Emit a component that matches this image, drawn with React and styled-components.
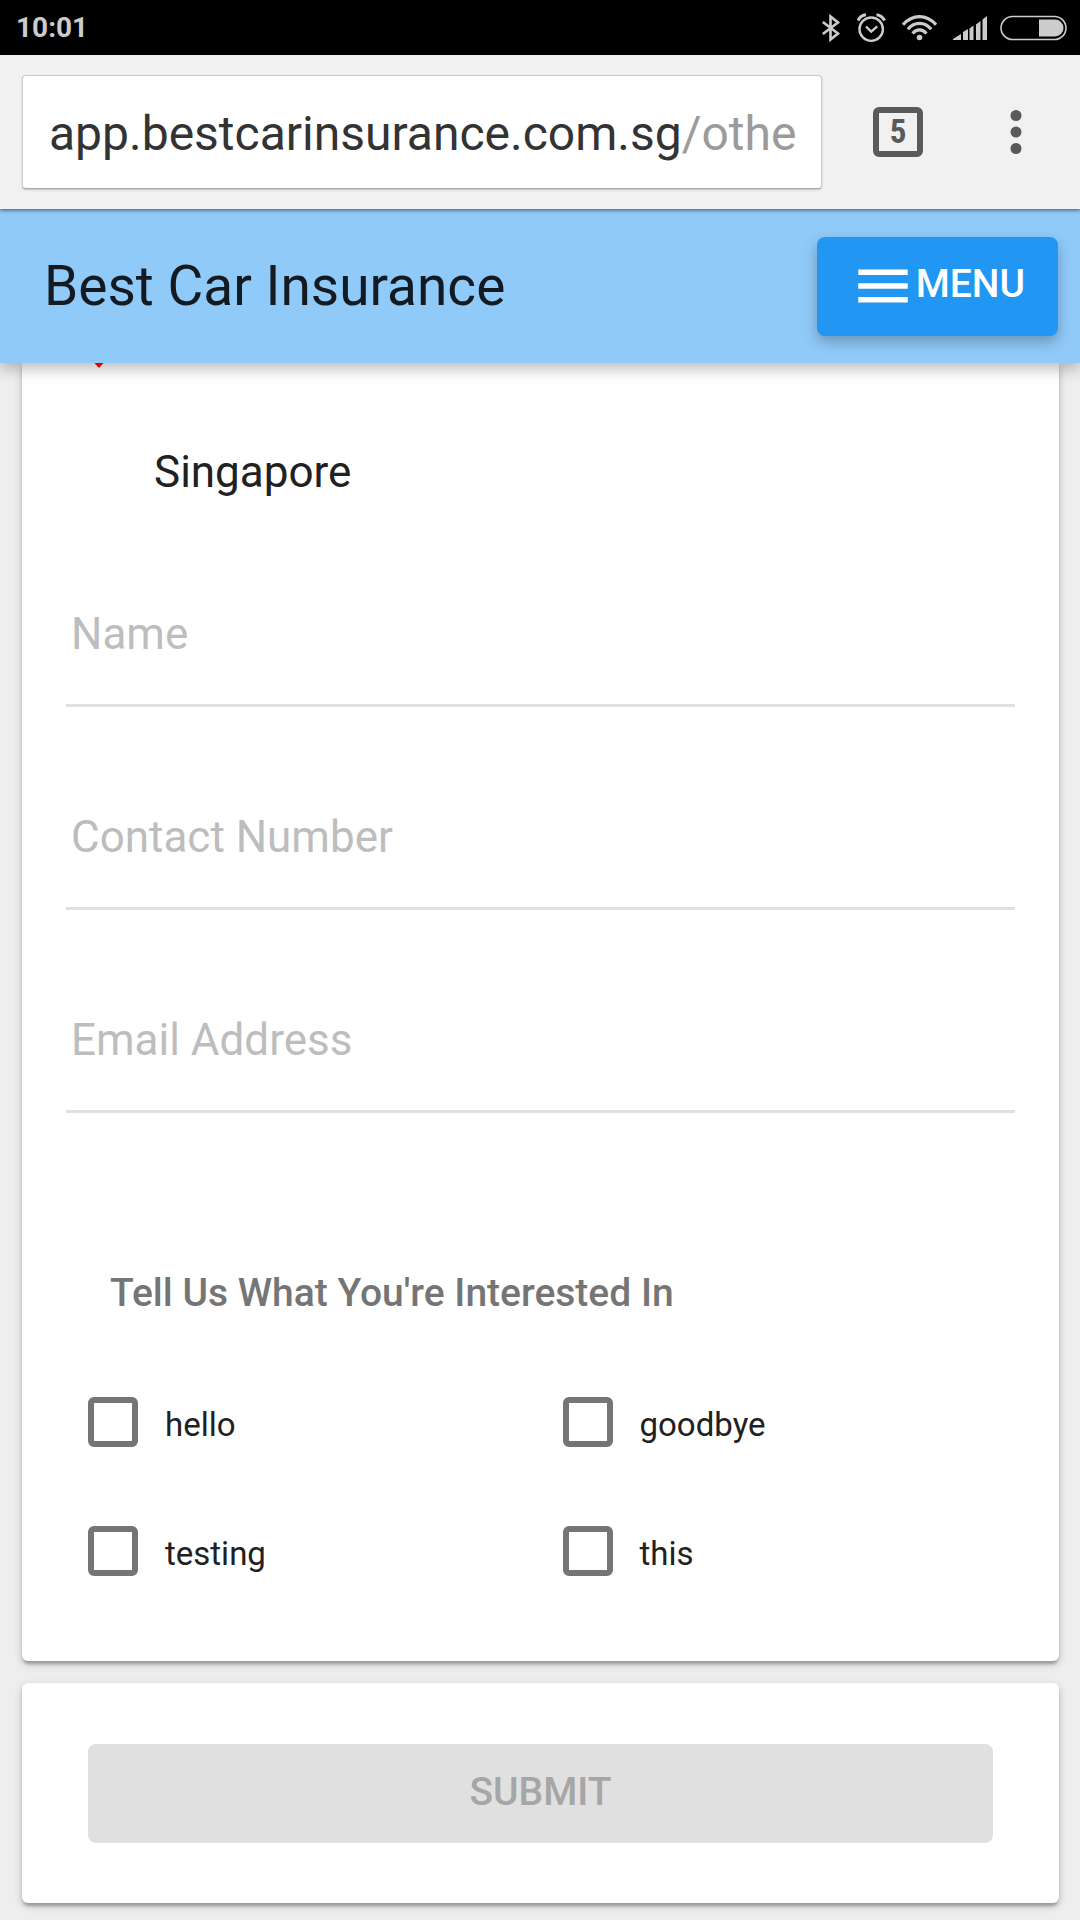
import React, { useState } from "react";
import styled, { createGlobalStyle } from "styled-components";

const GlobalStyle = createGlobalStyle`
  *, *::before, *::after { box-sizing: border-box; }
  body {
    margin: 0;
    background: #eeeeee;
    color: #212121;
    font-family: Roboto, "Liberation Sans", sans-serif;
  }
  button, input { font-family: inherit; }
`;

const Page = styled.div`
  display: flex;
  flex-direction: column;
  min-height: 100vh;
`;

const StatusBar = styled.div`
  display: flex;
  align-items: center;
  justify-content: space-between;
  height: 55px;
  padding: 0 13px 0 16px;
  background: #000;
  color: #ccc;
`;

const Clock = styled.time`
  font-size: 28px;
  line-height: 34px;
  font-weight: 700;
`;

const StatusIcons = styled.div`
  display: flex;
  align-items: center;
  gap: 13px;
`;

const BrowserBar = styled.div`
  position: relative;
  z-index: 3;
  display: flex;
  align-items: center;
  gap: 34px;
  height: 154px;
  padding: 0 22px;
  background: #f1f1f1;
  box-shadow: 0 1px 4px rgba(0, 0, 0, 0.6);
`;

const AddressBox = styled.button`
  flex: 1;
  min-width: 0;
  height: 114px;
  padding: 4px 26px 0;
  border: 1px solid #cbcbcb;
  border-bottom-color: #a9a9a9;
  border-radius: 4px;
  background: #fff;
  box-shadow: 0 1px 2px rgba(0, 0, 0, 0.2);
  color: #333;
  font-size: 48px;
  line-height: 58px;
  text-align: left;
  white-space: nowrap;
  overflow: hidden;
`;

const AddressPath = styled.span`
  color: #9b9b9b;
`;

const BrowserButton = styled.button`
  display: flex;
  align-items: center;
  justify-content: center;
  width: 84px;
  height: 84px;
  padding: 0;
  border: 0;
  background: none;
  color: #5a5a5a;
`;

const TabCount = styled.span`
  display: flex;
  align-items: center;
  justify-content: center;
  width: 50px;
  height: 50px;
  border: 6px solid currentColor;
  border-radius: 6px;
  font-family: "Roboto Condensed", Roboto, sans-serif;
  font-size: 33px;
  line-height: 38px;
  font-weight: 700;
`;

const Toolbar = styled.header`
  position: relative;
  z-index: 2;
  display: flex;
  align-items: center;
  justify-content: space-between;
  height: 154px;
  padding: 0 22px 0 44px;
  background: #90caf9;
  box-shadow: 0 6px 14px rgba(0, 0, 0, 0.26);
`;

const Title = styled.h1`
  margin: 0;
  font-size: 55px;
  line-height: 66px;
  font-weight: 400;
  color: rgba(0, 0, 0, 0.87);
`;

const RaisedButton = styled.button`
  display: flex;
  align-items: center;
  justify-content: center;
  width: ${(p) => (p.$wide ? "100%" : "auto")};
  height: 99px;
  padding: 0 33px 4px;
  border: 0;
  border-radius: 8px;
  background: #2196f3;
  color: #fff;
  font-size: 39px;
  line-height: 46px;
  font-weight: 500;
  text-transform: uppercase;
  box-shadow: 0 6px 14px rgba(0, 0, 0, 0.26);

  &:disabled {
    background: #e0e0e0;
    color: #a6a6a6;
    box-shadow: none;
  }
`;

const Content = styled.form`
  display: flex;
  flex-direction: column;
  gap: 22px;
  padding: 0 21px 16px 22px;
`;

const Card = styled.section`
  padding: ${(p) => p.$padding};
  border-radius: ${(p) => (p.$continued ? "0 0 6px 6px" : "6px")};
  background: #fff;
  box-shadow: 0 3px 8px rgba(0, 0, 0, 0.2), 0 3px 3px rgba(0, 0, 0, 0.14),
    0 6px 3px -3px rgba(0, 0, 0, 0.12);
`;

const PinTip = styled.svg`
  display: block;
  position: relative;
  z-index: 3;
  margin-left: 28px;
`;

const Place = styled.p`
  margin: 78px 0 110px 88px;
  font-size: 44px;
  line-height: 52px;
`;

const Fields = styled.div`
  display: flex;
  flex-direction: column;
  gap: 104px;
`;

const TextField = styled.input`
  width: 100%;
  height: 99px;
  padding: 0 5px 44px;
  border: 0;
  border-bottom: 3px solid #e0e0e0;
  border-radius: 0;
  background: none;
  color: #212121;
  font-size: 44px;
  line-height: 52px;
  outline: none;

  &::placeholder {
    color: #bdbdbd;
    opacity: 1;
  }
`;

const Interests = styled.fieldset`
  margin: 157px 0 0;
  padding: 0;
  border: 0;
`;

const Legend = styled.legend`
  padding: 0 44px;
  color: #757575;
  font-size: 39px;
  line-height: 46px;
  font-weight: 500;
`;

const Options = styled.div`
  display: grid;
  grid-template-columns: 1fr 1fr;
  row-gap: 79px;
  padding-top: 81px;
`;

const Option = styled.label`
  display: flex;
  align-items: center;
  gap: 27px;
  height: 50px;
  padding-left: 22px;
  font-size: 33px;
  line-height: 38px;
`;

const OptionText = styled.span`
  padding-top: 6px;
`;

const Checkbox = styled.input`
  appearance: none;
  width: 50px;
  height: 50px;
  margin: 0;
  border: 6px solid #757575;
  border-radius: 6px;
  background: #fff;

  &:checked {
    border-color: #2196f3;
    background: #2196f3;
  }
`;

const BluetoothIcon = () => (
  <svg width="22" height="30" viewBox="0 0 22 30" fill="none" stroke="currentColor" strokeWidth="2.6" aria-hidden="true">
    <path d="M0.800 9 16 20.500 8.500 26.500V3.500L16 9.500 0.800 21" />
  </svg>
);

const AlarmIcon = () => (
  <svg width="30" height="30" viewBox="0 0 30 30" fill="none" stroke="currentColor" aria-hidden="true">
    <circle cx="14.2" cy="16.2" r="11.7" strokeWidth="2.4" />
    <path d="m9 13.5 5.2 5.2 6-5.4" strokeWidth="2.4" />
    <path d="M1 7.500C2.500 4.500 5.500 2.200 9 1.800M27.600 7.500C26 4.500 23 2.200 19.500 1.800" strokeWidth="3" />
  </svg>
);

const WifiIcon = () => (
  <svg width="40" height="28" viewBox="0 0 40 28" fill="none" stroke="currentColor" strokeWidth="3.2" aria-hidden="true">
    <path d="M3 10.800C12.500 0 26.500 0 36 10.800" />
    <path d="M7.800 15.200C14.500 7.400 24.500 7.400 31.200 15.200" />
    <path d="M12.600 19.400C16.600 14.600 22.400 14.600 26.400 19.400" />
    <circle cx="19.500" cy="23.500" r="2.800" fill="currentColor" stroke="none" />
  </svg>
);

const SignalIcon = () => (
  <svg width="34" height="24" viewBox="0 0 34 24" fill="currentColor" aria-hidden="true">
    <path d="M0 24v-1l8-5v6zM10 24v-8l5-3v11zM16.500 24V12.500l4-3V24zM23 24V8.500L27.500 5v19zM29.500 24V3.500L34 0v24z" />
  </svg>
);

const BatteryIcon = () => (
  <svg width="67" height="26" viewBox="0 0 67 26" aria-hidden="true">
    <rect x="1" y="1.500" width="65" height="23" rx="11.500" fill="none" stroke="currentColor" strokeWidth="1.600" />
    <path d="M39 4.500h16a8.500 8.500 0 0 1 0 17H39z" fill="currentColor" />
  </svg>
);

const MoreIcon = () => (
  <svg width="12" height="46" viewBox="0 0 12 46" fill="currentColor" aria-hidden="true">
    <circle cx="6" cy="6.500" r="5.500" />
    <circle cx="6" cy="23" r="5.500" />
    <circle cx="6" cy="39.500" r="5.500" />
  </svg>
);

const MenuIconSvg = styled.svg`
  display: block;
  margin-top: 4px;
`;

const MenuIcon = () => (
  <MenuIconSvg width="66" height="66" viewBox="0 0 24 24" fill="currentColor" aria-hidden="true">
    <path d="M3 18h18v-2H3v2zm0-5h18v-2H3v2zm0-7v2h18V6H3z" />
  </MenuIconSvg>
);

const fields = [
  { name: "name", type: "text", label: "Name" },
  { name: "contact", type: "tel", label: "Contact Number" },
  { name: "email", type: "email", label: "Email Address" },
];

const interests = ["hello", "goodbye", "testing", "this"];

export default function App() {
  const [values, setValues] = useState({ name: "", contact: "", email: "" });
  const complete = fields.every((f) => values[f.name].trim() !== "");

  return (
    <Page>
      <GlobalStyle />
      <StatusBar>
        <Clock>10:01</Clock>
        <StatusIcons>
          <BluetoothIcon />
          <AlarmIcon />
          <WifiIcon />
          <SignalIcon />
          <BatteryIcon />
        </StatusIcons>
      </StatusBar>

      <BrowserBar>
        <AddressBox type="button">
          app.bestcarinsurance.com.sg<AddressPath>/othe</AddressPath>
        </AddressBox>
        <BrowserButton type="button" aria-label="Open tabs">
          <TabCount>5</TabCount>
        </BrowserButton>
        <BrowserButton type="button" aria-label="More options">
          <MoreIcon />
        </BrowserButton>
      </BrowserBar>

      <Toolbar>
        <Title>Best Car Insurance</Title>
        <RaisedButton type="button">
          <MenuIcon />
          Menu
        </RaisedButton>
      </Toolbar>

      <Content onSubmit={(e) => e.preventDefault()}>
        <Card $continued $padding="0 44px 85px">
          <PinTip width="10" height="5" viewBox="0 0 10 5" aria-hidden="true">
            <path d="M0.500 0h9L5 5z" fill="#dd0000" />
          </PinTip>
          <Place>Singapore</Place>
          <Fields>
            {fields.map((f) => (
              <TextField
                key={f.name}
                type={f.type}
                name={f.name}
                placeholder={f.label}
                aria-label={f.label}
                value={values[f.name]}
                onChange={(e) => setValues({ ...values, [f.name]: e.target.value })}
              />
            ))}
          </Fields>
          <Interests>
            <Legend>Tell Us What You're Interested In</Legend>
            <Options>
              {interests.map((name) => (
                <Option key={name}>
                  <Checkbox type="checkbox" name={name} />
                  <OptionText>{name}</OptionText>
                </Option>
              ))}
            </Options>
          </Interests>
        </Card>

        <Card $padding="61px 66px 60px">
          <RaisedButton type="submit" $wide disabled={!complete}>
            Submit
          </RaisedButton>
        </Card>
      </Content>
    </Page>
  );
}
